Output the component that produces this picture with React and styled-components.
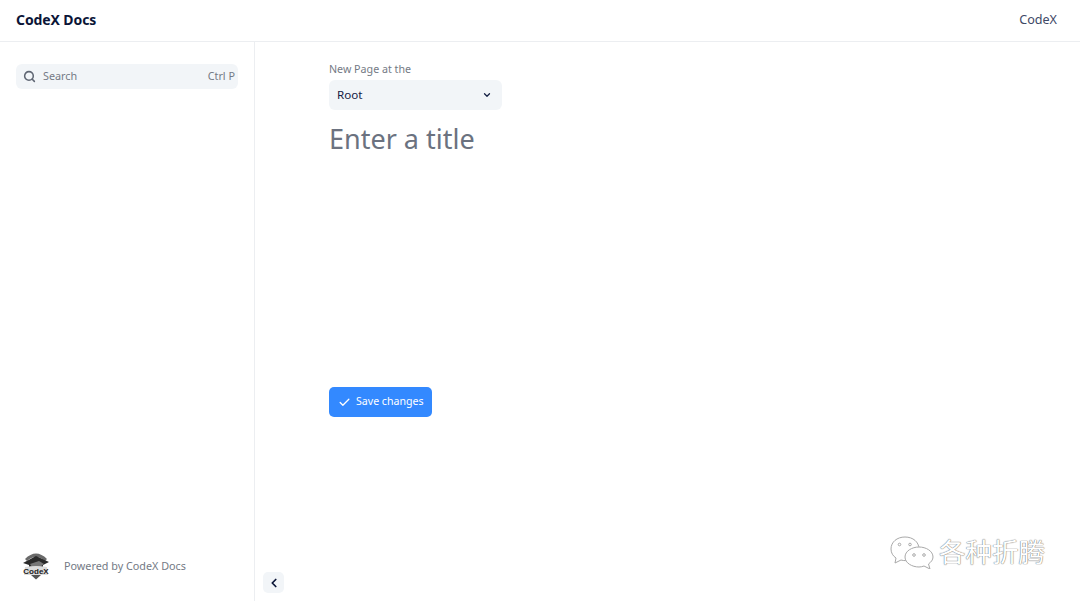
import React from "react";
import styled, { createGlobalStyle } from "styled-components";
import { Search, ChevronDown, ChevronLeft, Check } from "lucide-react";

const Global = createGlobalStyle`
  html, body { margin: 0; padding: 0; height: 100%; background: #fff; }
  body { font-family: "Noto Sans", "Open Sans", sans-serif; color: #0f1b3d; }
  #root { height: 100%; }
  * { box-sizing: border-box; }
`;
const Page = styled.div`
  position: relative; width: 1080px; height: 601px; overflow: hidden;
  display: flex; flex-direction: column; background: #fff;
`;
const Header = styled.header`
  height: 42px; flex: none; display: flex; align-items: center; justify-content: space-between;
  padding: 0 23px 3px 16px; border-bottom: 1px solid #eceef1;
`;
const Brand = styled.div`font-size: 14px; font-weight: 700; color: #0b1537; letter-spacing: -0.1px;`;
const NavLink = styled.div`font-size: 12.6px; color: #3e4866;`;
const Body = styled.div`flex: 1; display: flex; min-height: 0;`;
const Sidebar = styled.aside`
  width: 255px; flex: none; border-right: 1px solid #eceef1; padding: 22px 16px 21px;
  display: flex; flex-direction: column; justify-content: space-between;
`;
const SearchBox = styled.div`
  width: 222px; height: 25px; background: #f2f5f8; border-radius: 6px; display: flex; align-items: center;
  padding: 0 3px 2px 7px; color: #747a85; font-size: 10.8px;
  svg { color: #5f6673; margin: 2px 7px 0 0; }
`;
const Hint = styled.span`margin-left: auto;`;
const Powered = styled.div`display: flex; align-items: center; gap: 13px; padding-left: 5px; font-size: 10.8px; color: #747a85;`;
const Main = styled.main`flex: 1; padding: 20px 74px 0;`;
const Label = styled.div`font-size: 10.7px; line-height: 15px; color: #747a85; margin-bottom: 3px;`;
const Select = styled.div`
  width: 173px; height: 30px; background: #f2f5f8; border-radius: 6px; display: flex; align-items: center;
  justify-content: space-between; padding: 0 10px 2px 8px; font-size: 11.6px; color: #142044;
  svg { margin-top: 2px; }
`;
const Title = styled.div`
  font-size: 27px; line-height: 38px; margin-top: 10px; color: #6b7280; height: 267px;
`;
const SaveButton = styled.button`
  width: 103px; height: 30px; border: 0; border-radius: 5px; background: #3389ff; color: #fff;
  display: flex; align-items: center; gap: 5px; padding: 0 0 2px 9px; font: 10.6px "Noto Sans", sans-serif;
  svg { margin-top: 2px; }
`;
const Collapse = styled.button`
  position: absolute; left: 263px; top: 572px; width: 21px; height: 21px; border: 0; border-radius: 5px;
  background: #f2f5f8; color: #0b1537; display: flex; align-items: center; justify-content: center; padding: 0;
`;
const Watermark = styled.div`
  position: absolute; left: 890px; top: 534px; display: flex; align-items: center; gap: 5px;
  font: 26.5px "Noto Sans CJK SC", sans-serif; color: #fff;
  text-shadow: 0 0 1px #6b6b6b, 0 0 1px #777;
  span { margin-top: -3px; }
`;

const Logo = () => (
  <svg width="30" height="30" viewBox="0 0 30 30">
    <path d="M4 9 Q15 -2 26 9 L24 11 Q15 3 6 11Z" fill="#6a6a6a" />
    <path d="M2 13 L15 6 L28 12 L22 15 L22 18 L8 18 L8 15Z" fill="#2a2a2a" />
    <path d="M9 14 L18 11 L23 14 L19 17 L11 17Z" fill="#777" />
    <path d="M4 17 Q15 15 26 17 L27 25 L3 25Z" fill="#dcdcdc" />
    <text x="15" y="24" textAnchor="middle" fontSize="8" fontWeight="700" fill="#222" fontFamily="Liberation Sans, sans-serif">CodeX</text>
    <path d="M10 25 L15 29.5 L20 25Z" fill="#555" />
  </svg>
);
const WeChat = () => (
  <svg width="44" height="34" viewBox="0 0 44 34" fill="#fff" stroke="#a9a9a9" strokeWidth="1">
    <path d="M15 2 C7 2 1 7 1 14 C1 18 3 21 6 23 L5 28 L11 25 C12.5 25.5 14 25.6 15.5 25.6 C25 26 29 20 29 14 C29 7 23 2 15 2Z" />
    <path d="M29 12 C22 12 15 16 15 22 C15 28 22 32 29 32 C31 32 32 31.6 34 31 L40 34 L38.5 29 C41 27 43 25 43 22 C43 16 36 12 29 12Z" />
    <circle cx="9.5" cy="9.5" r="1.3" /><circle cx="20" cy="9.5" r="1.3" />
    <circle cx="24" cy="20" r="1.3" /><circle cx="34" cy="20" r="1.3" />
  </svg>
);

export default function App() {
  return (
    <Page>
      <Global />
      <Header><Brand>CodeX Docs</Brand><NavLink>CodeX</NavLink></Header>
      <Body>
        <Sidebar>
          <SearchBox><Search size={13} strokeWidth={2.8} />Search<Hint>Ctrl P</Hint></SearchBox>
          <Powered><Logo />Powered by CodeX Docs</Powered>
        </Sidebar>
        <Main>
          <Label>New Page at the</Label>
          <Select>Root<ChevronDown size={10} strokeWidth={3} /></Select>
          <Title>Enter a title</Title>
          <SaveButton><Check size={13} strokeWidth={2.4} />Save changes</SaveButton>
        </Main>
      </Body>
      <Collapse><ChevronLeft size={14} strokeWidth={3} /></Collapse>
      <Watermark><WeChat /><span>各种折腾</span></Watermark>
    </Page>
  );
}
